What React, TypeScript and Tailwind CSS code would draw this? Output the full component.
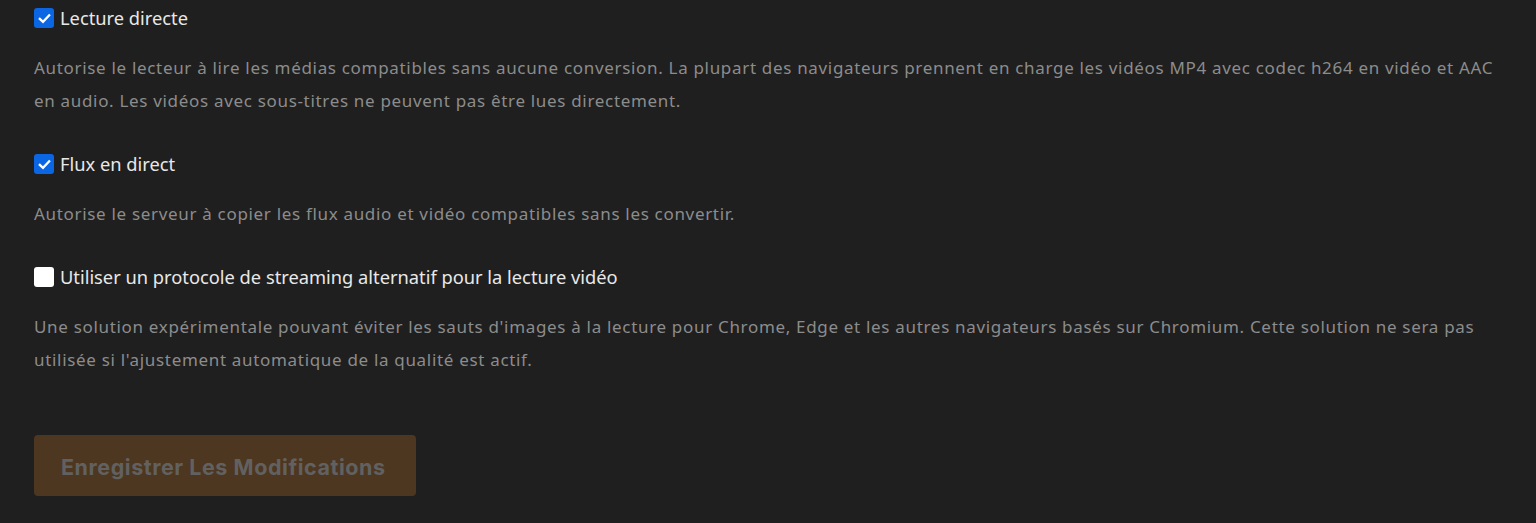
const OPTIONS = [
  {
    label: 'Lecture directe',
    checked: true,
    description:
      'Autorise le lecteur à lire les médias compatibles sans aucune conversion. La plupart des navigateurs prennent en charge les vidéos MP4 avec codec h264 en vidéo et AAC en audio. Les vidéos avec sous-titres ne peuvent pas être lues directement.',
  },
  {
    label: 'Flux en direct',
    checked: true,
    description: 'Autorise le serveur à copier les flux audio et vidéo compatibles sans les convertir.',
  },
  {
    label: 'Utiliser un protocole de streaming alternatif pour la lecture vidéo',
    checked: false,
    description:
      "Une solution expérimentale pouvant éviter les sauts d'images à la lecture pour Chrome, Edge et les autres navigateurs basés sur Chromium. Cette solution ne sera pas utilisée si l'ajustement automatique de la qualité est actif.",
  },
]

function Checkbox({ checked }: { checked: boolean }) {
  if (!checked) {
    return <span className="block h-[20px] w-[20px] shrink-0 rounded-[3px] bg-white" />
  }
  return (
    <span className="grid h-[20px] w-[20px] shrink-0 place-items-center rounded-[3px] bg-[#0b66e4]">
      <svg viewBox="0 0 16 16" className="h-[15px] w-[15px]" fill="none">
        <path d="M3 8.4 6.4 11.6 13 4.6" stroke="white" strokeWidth={2.4} strokeLinecap="square" />
      </svg>
    </span>
  )
}

export default function App() {
  return (
    <main className="min-h-screen bg-[#1f1f1f] px-[34px] font-['Noto_Sans',sans-serif]">
      <div className="w-[1468px] pt-[6px]">
        {OPTIONS.map((option) => (
          <div key={option.label} className="mb-[35px]">
            <label className="flex h-[24px] items-center gap-[6px] text-[18.3px] text-[#e8e8e8]">
              <Checkbox checked={option.checked} />
              <span>{option.label}</span>
            </label>
            <p className="mt-[21px] text-[17px] leading-[33px] tracking-[0.68px] text-[#8c8c8c]">
              {option.description}
            </p>
          </div>
        ))}

        <button
          type="button"
          disabled
          className="mt-[24px] h-[61px] w-[382px] rounded-[4px] bg-[#4e3720] pl-[27px] pt-[3px] text-left font-['Inter',sans-serif] text-[21.5px] font-bold tracking-[0.55px] text-[#616161]"
        >
          Enregistrer Les Modifications
        </button>
      </div>
    </main>
  )
}
